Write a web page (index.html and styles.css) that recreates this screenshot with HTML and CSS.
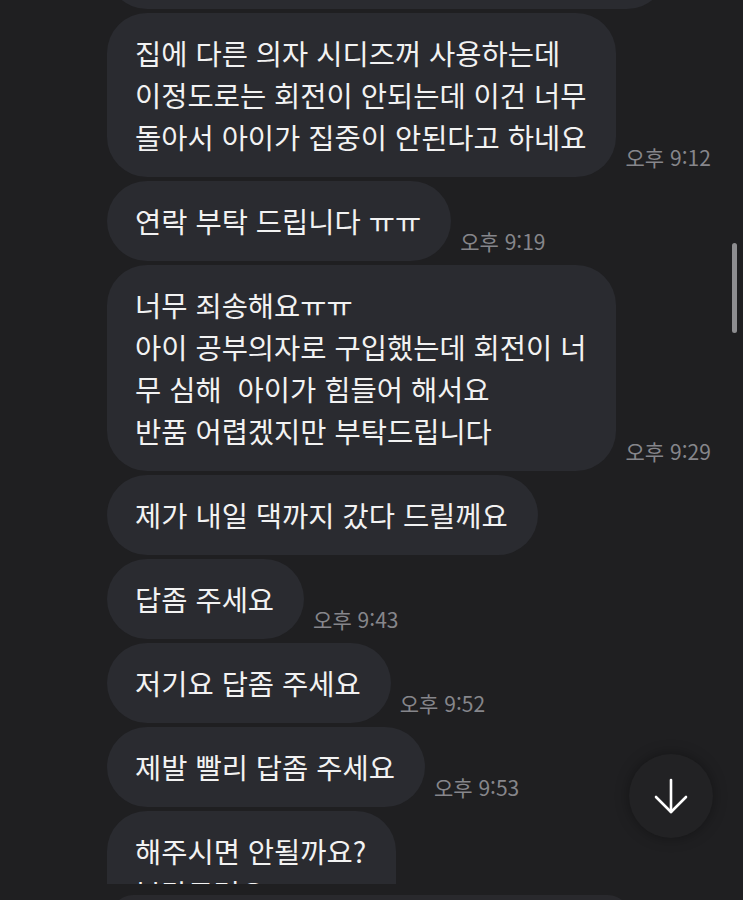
FILE: index.html
```html
<!DOCTYPE html>
<html lang="ko">
<head>
  <meta charset="utf-8">
  <meta name="viewport" content="width=device-width, initial-scale=1.0">
  <title>채팅</title>
  <link rel="stylesheet" href="styles.css">
</head>
<body>
  <div class="chat">
    <div class="thread">
      <div class="row">
        <div class="bubble prev"></div>
      </div>

      <div class="row">
        <div class="bubble">집에 다른 의자 시디즈꺼 사용하는데<br>이정도로는 회전이 안되는데 이건 너무<br>돌아서 아이가 집중이 안된다고 하네요</div>
        <span class="time">오후 9:12</span>
      </div>

      <div class="row">
        <div class="bubble">연락 부탁 드립니다 ㅠㅠ</div>
        <span class="time">오후 9:19</span>
      </div>

      <div class="row">
        <div class="bubble">너무 죄송해요ㅠㅠ<br>아이 공부의자로 구입했는데 회전이 너<br>무 심해&nbsp; 아이가 힘들어 해서요<br>반품 어렵겠지만 부탁드립니다</div>
        <span class="time">오후 9:29</span>
      </div>

      <div class="row">
        <div class="bubble">제가 내일 댁까지 갔다 드릴께요</div>
      </div>

      <div class="row">
        <div class="bubble">답좀 주세요</div>
        <span class="time">오후 9:43</span>
      </div>

      <div class="row">
        <div class="bubble">저기요 답좀 주세요</div>
        <span class="time">오후 9:52</span>
      </div>

      <div class="row">
        <div class="bubble">제발 빨리 답좀 주세요</div>
        <span class="time">오후 9:53</span>
      </div>

      <div class="row">
        <div class="bubble">해주시면 안될까요?<br>부탁드려요</div>
      </div>
    </div>

    <div class="scrollbar"></div>

    <button class="to-bottom" type="button" aria-label="맨 아래로">
      <svg width="34" height="36" viewBox="0 0 34 36" fill="none" stroke="#fff" stroke-width="2.6" stroke-linecap="round" stroke-linejoin="round">
        <line x1="17" y1="2" x2="17" y2="34"/>
        <polyline points="2,19 17,34 32,19"/>
      </svg>
    </button>
  </div>

  <div class="composer">
    <div class="field"></div>
  </div>
</body>
</html>
```

FILE: styles.css
```css
body {
  margin: 0;
  background: #1f1f21;
  color: #f2f2f2;
  font-family: "Noto Sans CJK KR", "Noto Sans", sans-serif;
  height: 900px;
  overflow: hidden;
}
.chat {
  position: relative;
  height: 884px;
  overflow: hidden;
}
.thread {
  display: flex;
  flex-direction: column;
  gap: 4px;
  padding-left: 107px;
}
.row {
  display: flex;
  align-items: flex-end;
  gap: 9px;
}
.bubble {
  background: #2a2b30;
  border-radius: 40px;
  padding: 19px 30px 19px 28px;
  font-size: 28.5px;
  line-height: 42px;
  white-space: nowrap;
}
.bubble.prev {
  width: 502px;
  height: 42px;
  padding-top: 0;
  padding-bottom: 38px;
  margin-top: -71px;
}
.time {
  font-size: 21px;
  line-height: 20px;
  color: #86868b;
  margin-bottom: 10px;
  white-space: nowrap;
}
.scrollbar {
  position: absolute;
  left: 732px;
  top: 243px;
  width: 5px;
  height: 90px;
  border-radius: 3px;
  background: #8d8d90;
}
.to-bottom {
  position: absolute;
  left: 629px;
  top: 754px;
  width: 84px;
  height: 84px;
  border: 0;
  border-radius: 50%;
  background: #222224;
  box-shadow: 0 0 14px rgba(0, 0, 0, 0.35);
  display: flex;
  align-items: center;
  justify-content: center;
  padding: 0;
}
.composer {
  height: 16px;
  padding: 11px 0 0 111px;
}
.field {
  width: 519px;
  height: 44px;
  border-radius: 22px;
  background: #29292d;
}
```
